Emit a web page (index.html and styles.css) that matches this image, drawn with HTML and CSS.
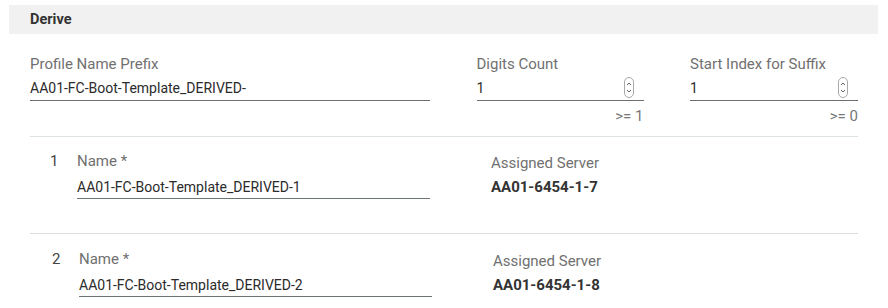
FILE: index.html
```html
<!DOCTYPE html>
<html>
<head>
<meta charset="utf-8">
<link rel="stylesheet" href="styles.css">
</head>
<body>
<div class="header">Derive</div>
<div class="content">
  <div class="top-grid">
    <div class="field">
      <div class="label">Profile Name Prefix</div>
      <div class="input">AA01-FC-Boot-Template_DERIVED-</div>
    </div>
    <div class="field">
      <div class="label">Digits Count</div>
      <div class="input">1<svg class="spin" width="10" height="21" viewBox="0 0 10 21"><rect x="0.5" y="0.5" width="9" height="20" rx="4.5" fill="#fff" stroke="#a8a8a8"/><path d="M3 8 L5 6 L7 8" fill="none" stroke="#666" stroke-width="1"/><path d="M3 13 L5 15 L7 13" fill="none" stroke="#666" stroke-width="1"/></svg></div>
      <div class="hint">&gt;= 1</div>
    </div>
    <div class="field">
      <div class="label">Start Index for Suffix</div>
      <div class="input">1<svg class="spin" width="10" height="21" viewBox="0 0 10 21"><rect x="0.5" y="0.5" width="9" height="20" rx="4.5" fill="#fff" stroke="#a8a8a8"/><path d="M3 8 L5 6 L7 8" fill="none" stroke="#666" stroke-width="1"/><path d="M3 13 L5 15 L7 13" fill="none" stroke="#666" stroke-width="1"/></svg></div>
      <div class="hint">&gt;= 0</div>
    </div>
  </div>
  <div class="row row-first">
    <div class="num">1</div>
    <div class="name-field">
      <div class="label">Name *</div>
      <div class="row-input">AA01-FC-Boot-Template_DERIVED-1</div>
    </div>
    <div class="server">
      <div class="label">Assigned Server</div>
      <div class="server-value">AA01-6454-1-7</div>
    </div>
  </div>
  <div class="row row-second">
    <div class="num">2</div>
    <div class="name-field">
      <div class="label">Name *</div>
      <div class="row-input">AA01-FC-Boot-Template_DERIVED-2</div>
    </div>
    <div class="server">
      <div class="label">Assigned Server</div>
      <div class="server-value">AA01-6454-1-8</div>
    </div>
  </div>
</div>
</body>
</html>
```

FILE: styles.css
```css
html, body {
  margin: 0;
  padding: 0;
  background: #ffffff;
}
body {
  width: 888px;
  height: 308px;
  overflow: hidden;
  font-family: Roboto, "Liberation Sans", sans-serif;
  font-size: 14px;
  color: #2b2b2b;
}
.header {
  margin: 5px 10px 0 9px;
  height: 29px;
  background: #f1f1f1;
  padding-left: 21px;
  display: flex;
  align-items: center;
  font-weight: 700;
  font-size: 14.5px;
  color: #333;
  line-height: 16px;
}
.content {
  padding: 0 30px;
}
.top-grid {
  margin-top: 22px;
  display: grid;
  grid-template-columns: 400px 167px 168px;
  justify-content: space-between;
}
.label {
  font-size: 15px;
  line-height: 16px;
  color: #707070;
}
.input {
  position: relative;
  line-height: 16px;
  padding-top: 8px;
  padding-bottom: 4px;
  border-bottom: 1px solid #6f6f6f;
  color: #2b2b2b;
}
.spin {
  position: absolute;
  right: 10px;
  top: 5px;
  display: block;
}
.hint {
  margin-top: 7px;
  font-size: 15px;
  line-height: 16px;
  text-align: right;
  color: #777;
}
.row {
  display: flex;
  border-top: 1px solid #dde3e1;
  padding-top: 16px;
  padding-left: 20px;
}
.row-first {
  margin-top: 12px;
  padding-bottom: 34px;
}
.row-second {
  border-top-color: #dcdcdc;
  padding-left: 22px;
  padding-top: 17px;
}
.num {
  width: 27px;
  font-size: 15px;
  line-height: 16px;
  color: #444;
}
.name-field {
  width: 353px;
}
.row-input {
  margin-top: 10px;
  line-height: 16px;
  padding-bottom: 3px;
  border-bottom: 1px solid #6c7474;
}
.server {
  margin-left: 61px;
  padding-top: 2px;
}
.server-value {
  margin-top: 8px;
  font-size: 15px;
  line-height: 16px;
  font-weight: 700;
  color: #333;
}
```
